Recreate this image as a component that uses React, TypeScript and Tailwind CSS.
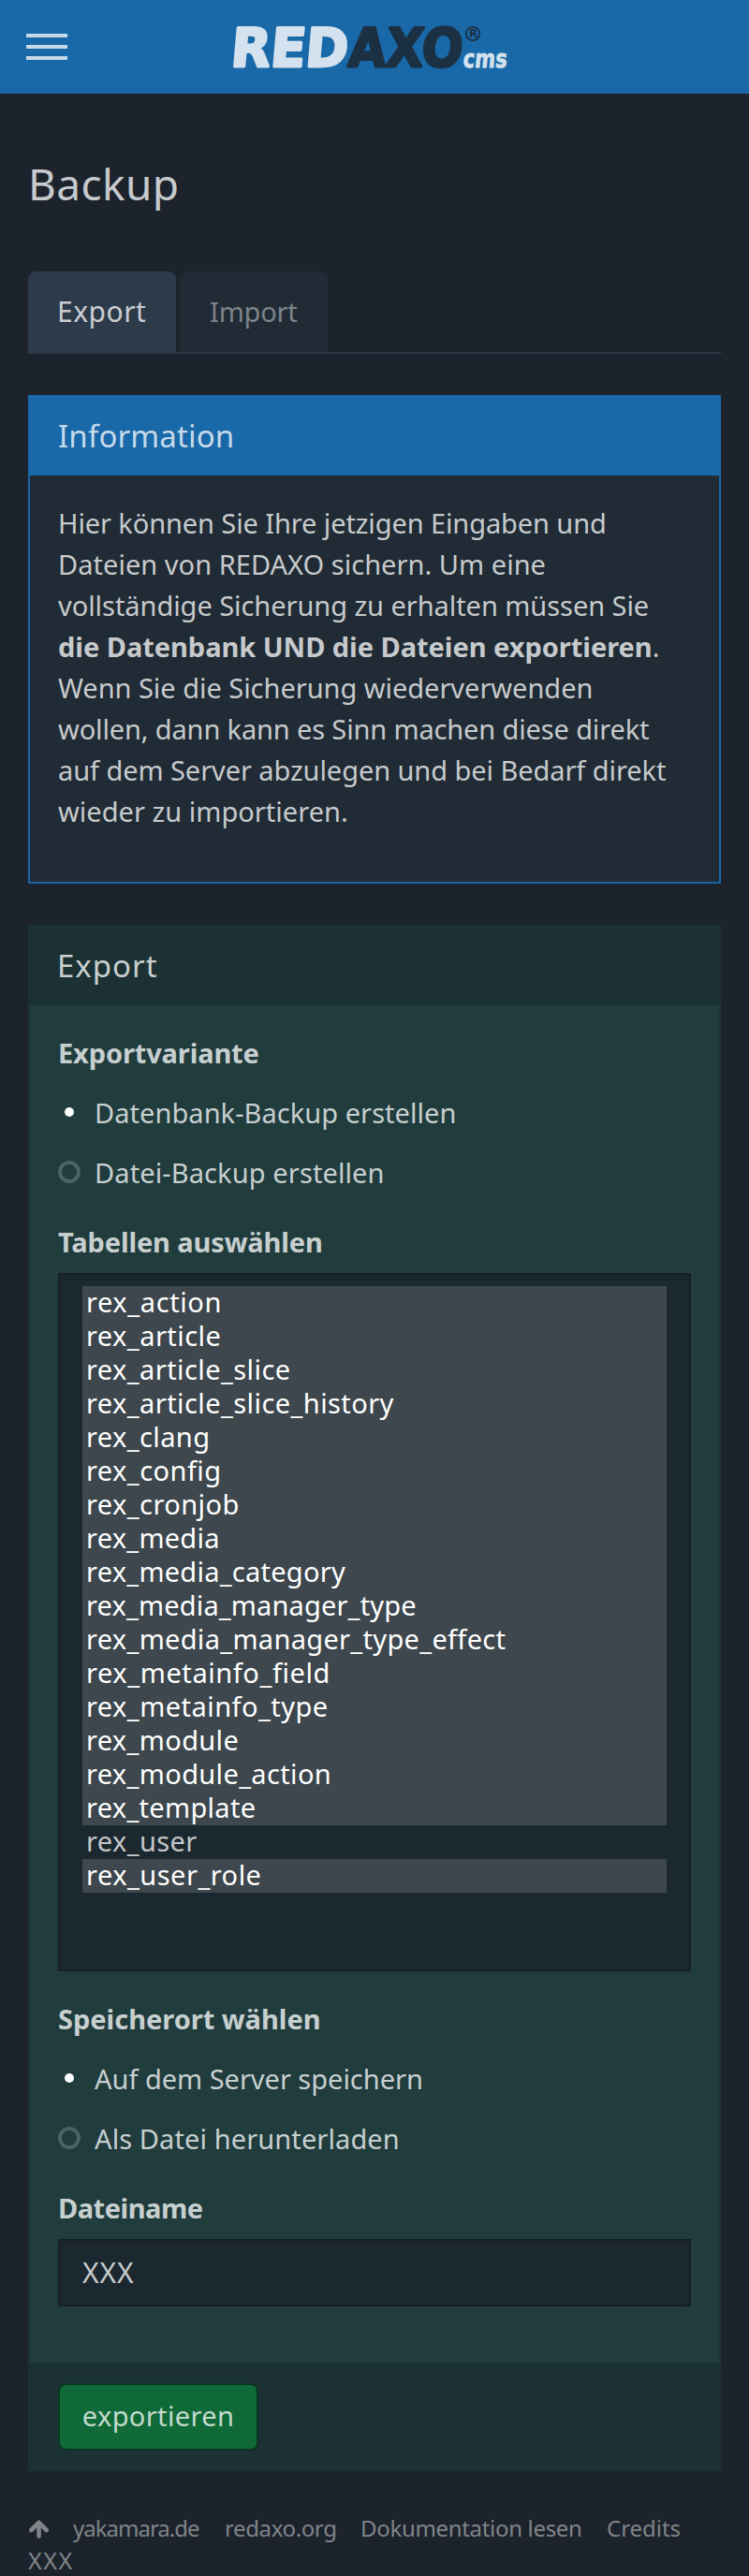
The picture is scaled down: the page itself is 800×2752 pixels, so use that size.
import React from "react";

const TABLES: { name: string; tracking: string; selected?: boolean }[] = [
  { name: "rex_action", tracking: "tracking-[0.6px]" },
  { name: "rex_article", tracking: "tracking-[0.45px]" },
  { name: "rex_article_slice", tracking: "tracking-[0.42px]" },
  { name: "rex_article_slice_history", tracking: "tracking-[0.42px]" },
  { name: "rex_clang", tracking: "tracking-[0.4px]" },
  { name: "rex_config", tracking: "tracking-[0.45px]" },
  { name: "rex_cronjob", tracking: "tracking-[0.42px]" },
  { name: "rex_media", tracking: "tracking-[0.25px]" },
  { name: "rex_media_category", tracking: "tracking-[0.25px]" },
  { name: "rex_media_manager_type", tracking: "tracking-[0.15px]" },
  { name: "rex_media_manager_type_effect", tracking: "tracking-[0.31px]" },
  { name: "rex_metainfo_field", tracking: "tracking-[0.58px]" },
  { name: "rex_metainfo_type", tracking: "tracking-[0.45px]" },
  { name: "rex_module", tracking: "tracking-[0.35px]" },
  { name: "rex_module_action", tracking: "tracking-[0.35px]" },
  { name: "rex_template", tracking: "tracking-[0.3px]" },
  { name: "rex_user", tracking: "tracking-[0.4px]", selected: false },
  { name: "rex_user_role", tracking: "tracking-[0.48px]" },
];

function Logo() {
  return (
    <svg className="overflow-visible font-bold" fontFamily="'DejaVu Sans', sans-serif" width="300" height="60" viewBox="0 0 300 60">
      <g transform="translate(0 44.5) skewX(-5)" fontSize="57" strokeWidth="3" strokeLinejoin="round">
        <text x="-3.5" y="0" fill="#d3e2ee" stroke="#d3e2ee" textLength="125" lengthAdjust="spacingAndGlyphs">RED</text>
        <text x="122" y="0" fill="#1b3043" stroke="#1b3043" textLength="122" lengthAdjust="spacingAndGlyphs">AXO</text>
      </g>
      <circle cx="256" cy="10" r="7.2" fill="none" stroke="#1b3043" strokeWidth="1.8" />
      <text x="252" y="14.2" fontSize="11.5" fill="#1b3043" textLength="9" lengthAdjust="spacingAndGlyphs">R</text>
      <g transform="translate(246 45.5) skewX(-5)" fontSize="27">
        <text x="-1" y="0" fill="#d3e2ee" stroke="#d3e2ee" strokeWidth="0.8" textLength="47" lengthAdjust="spacingAndGlyphs">cms</text>
      </g>
    </svg>
  );
}

function Radio({ label, tracking, checked }: { label: string; tracking: string; checked?: boolean }) {
  return (
    <label className="flex h-10 items-center">
      <span className="mb-[2px] flex size-6 items-center justify-center">
        {checked ? (
          <span className="size-[10px] rounded-full bg-white" />
        ) : (
          <span className="size-6 rounded-full border-4 border-[#4c6363]" />
        )}
      </span>
      <span className={`ml-[15px] leading-10 ${tracking}`}>{label}</span>
    </label>
  );
}

function GroupLabel({ children, className }: { children: string; className: string }) {
  return <div className={`font-bold leading-10 ${className}`}>{children}</div>;
}

export default function App() {
  return (
    <div className="h-[2752px] w-[800px] overflow-hidden whitespace-nowrap bg-[#1c232c] font-['Noto_Sans',sans-serif] text-[29px] text-[#c7cacc]">
      <header className="flex h-[100px] items-start bg-[#1968a8] pl-7">
        <button className="mt-9 flex w-11 flex-col gap-2" aria-label="Menu">
          <span className="h-1 w-full bg-[#c5d9e9]" />
          <span className="h-1 w-full bg-[#c5d9e9]" />
          <span className="h-1 w-full bg-[#c5d9e9]" />
        </button>
        <div className="ml-[177px] mt-[26px]">
          <Logo />
        </div>
      </header>

      <main className="px-[30px] pt-[68px]">
        <h1 className="text-[46px] leading-[56px] tracking-[0.4px]">Backup</h1>

        <nav className="mt-[66px] flex h-[88px] gap-1 border-b-2 border-[#2d3a4a]">
          <a className="h-[86px] w-[158px] rounded-t-lg bg-[#2d3a4a] pl-[31px] pt-[21px] text-[30px] leading-[44px] tracking-[0.5px] text-[#cacdd1]">Export</a>
          <a className="h-[86px] w-[158px] rounded-t-lg bg-[#202b35] pl-[32px] pt-[21px] leading-[44px] tracking-[-0.2px] text-[#7d8489]">Import</a>
        </nav>

        <section className="mt-11 flex h-[522px] flex-col border-2 border-[#1968a8] bg-[#202b35]">
          <h2 className="-mt-[2px] h-[86px] bg-[#1968a8] pl-[30px] text-[33px] leading-[87px] tracking-[0.15px] text-[#c5d9e9]">Information</h2>
          <p className="pl-[30px] pt-[29px] leading-[44px]">
            <span className="tracking-[-0.1px]">Hier können Sie Ihre jetzigen Eingaben und</span><br />
            <span className="tracking-[0.03px]">Dateien von REDAXO sichern. Um eine</span><br />
            <span className="tracking-[-0.05px]">vollständige Sicherung zu erhalten müssen Sie</span><br />
            <b className="tracking-[-0.04px]">die Datenbank UND die Dateien exportieren</b>.<br />
            <span className="tracking-[-0.03px]">Wenn Sie die Sicherung wiederverwenden</span><br />
            <span className="tracking-[-0.14px]">wollen, dann kann es Sinn machen diese direkt</span><br />
            <span className="tracking-[-0.07px]">auf dem Server abzulegen und bei Bedarf direkt</span><br />
            <span className="tracking-[0.03px]">wieder zu importieren.</span>
          </p>
        </section>

        <section className="mt-11 text-[#c7cfcf]">
          <h2 className="h-[86px] bg-[#1c3133] pl-[31px] text-[33px] leading-[87px] tracking-[1px]">Export</h2>
          <div className="h-[1450px] border-x-2 border-[#1c3435] bg-[#203c3d] px-[30px] pt-[31px]">
            <GroupLabel className="tracking-[-0.14px]">Exportvariante</GroupLabel>
            <div className="mt-6 flex flex-col gap-6">
              <Radio label="Datenbank-Backup erstellen" tracking="tracking-[0.05px]" checked />
              <Radio label="Datei-Backup erstellen" tracking="tracking-[0.11px]" />
            </div>

            <GroupLabel className="mt-[34px] tracking-[-0.13px]">Tabellen auswählen</GroupLabel>
            <div className="mt-[13px] h-[746px] border-2 border-[#161f27] bg-[#1c2830] px-6 pt-3 shadow-[inset_0_2px_2px_rgba(0,0,0,0.08)]">
              {TABLES.map((t) => (
                <div
                  key={t.name}
                  className={`h-9 pl-1 leading-[34px] ${t.tracking} ${t.selected === false ? "text-[#c4c7c9]" : "bg-[#3d474d] text-white"}`}
                >
                  {t.name}
                </div>
              ))}
            </div>

            <GroupLabel className="mt-[31px] tracking-[-0.02px]">Speicherort wählen</GroupLabel>
            <div className="mt-6 flex flex-col gap-6">
              <Radio label="Auf dem Server speichern" tracking="tracking-[-0.02px]" checked />
              <Radio label="Als Datei herunterladen" tracking="tracking-[0.1px]" />
            </div>

            <GroupLabel className="mt-[34px] tracking-[-0.5px]">Dateiname</GroupLabel>
            <div className="mt-[13px] h-[72px] border-2 border-[#161f27] bg-[#1c2830] pl-6 text-[30px] leading-[67px] tracking-[0.9px] text-[#c7cacc] shadow-[inset_0_2px_2px_rgba(0,0,0,0.08)]">
              XXX
            </div>
          </div>
          <div className="h-[116px] bg-[#1c3133] pl-8 pt-[22px]">
            <button className="block h-[72px] w-[214px] rounded-lg border-2 border-[#0b3520] bg-[#0f6a38] text-center text-[#c3dacd]">
              <span className="block h-[68px] leading-[65px] tracking-[0.35px]">exportieren</span>
            </button>
          </div>
        </section>
      </main>

      <footer className="flex flex-col px-[30px] pt-11 text-2xl leading-[34px] text-[#808488]">
        <div className="flex h-[34px]">
          <svg className="mt-[7px]" width="23" height="22" viewBox="0 0 23 22" fill="none" stroke="currentColor" strokeWidth="4.6" strokeLinecap="round" strokeLinejoin="round" aria-hidden="true">
            <path d="M3.3 12 11.5 3.8l8.2 8.2M11.5 4.5v14" />
          </svg>
          <a className="ml-[25px] w-[162px] leading-[34px] tracking-[-1px]">yakamara.de</a>
          <a className="w-[145px] leading-[34px] tracking-[-0.38px]">redaxo.org</a>
          <a className="w-[263px] leading-[34px] tracking-[-0.32px]">Dokumentation lesen</a>
          <a className="leading-[34px] tracking-[-0.04px]">Credits</a>
        </div>
        <span className="text-[25px] leading-[34px] tracking-[1.6px]">XXX</span>
      </footer>
    </div>
  );
}
